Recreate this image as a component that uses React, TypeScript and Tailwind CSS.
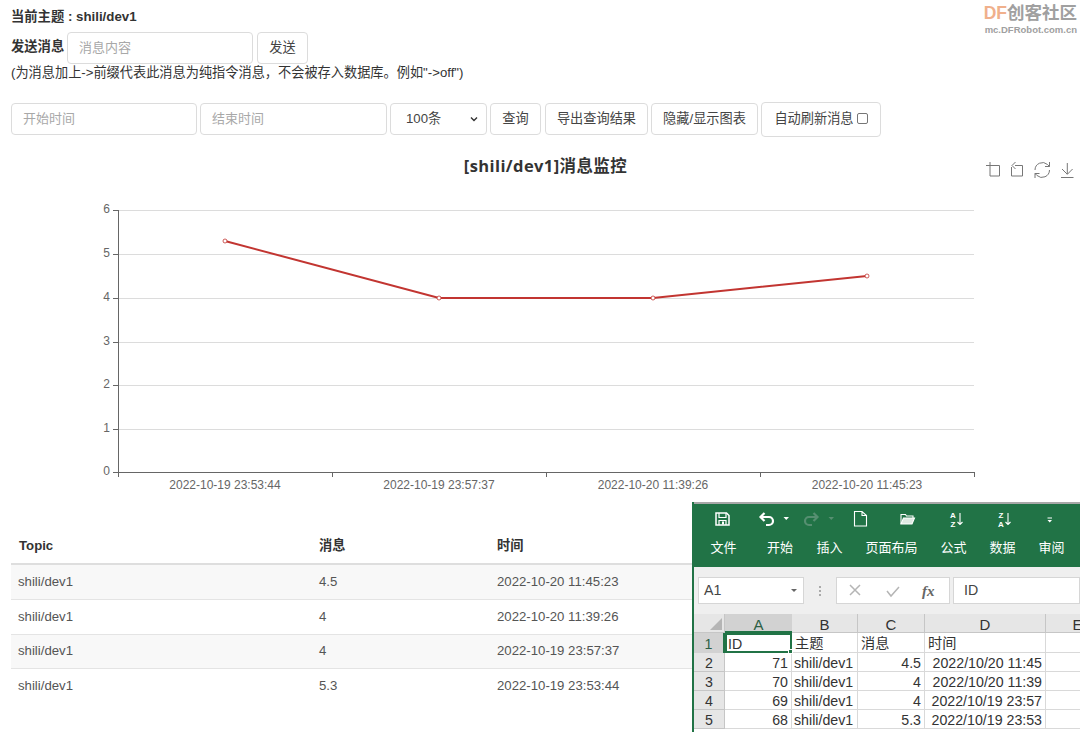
const FONT = "font-['Liberation_Sans','Noto_Sans_CJK_SC',sans-serif]";

const rows = [
  ["shili/dev1", "4.5", "2022-10-20 11:45:23"],
  ["shili/dev1", "4", "2022-10-20 11:39:26"],
  ["shili/dev1", "4", "2022-10-19 23:57:37"],
  ["shili/dev1", "5.3", "2022-10-19 23:53:44"],
];

const sheet = [
  ["2", "71", "shili/dev1", "4.5", "2022/10/20 11:45"],
  ["3", "70", "shili/dev1", "4", "2022/10/20 11:39"],
  ["4", "69", "shili/dev1", "4", "2022/10/19 23:57"],
  ["5", "68", "shili/dev1", "5.3", "2022/10/19 23:53"],
];

function Chart() {
  const ys = [210, 254, 298, 342, 385, 429, 472];
  const xs = [118, 332, 546, 760, 974];
  const labels = ["2022-10-19 23:53:44", "2022-10-19 23:57:37", "2022-10-20 11:39:26", "2022-10-20 11:45:23"];
  const pts: [number, number][] = [[225, 241], [439, 298], [653, 298], [867, 276]];
  return (
    <svg width="1080" height="360" viewBox="0 150 1080 360" className="block" fontFamily="'Liberation Sans','Noto Sans CJK SC',sans-serif">
      <text x="545.500" y="172" textAnchor="middle" fontSize="16.500" letterSpacing="0.4" fontWeight="700" fill="#333" fontFamily="'Open Sans','Noto Sans CJK SC',sans-serif">[shili/dev1]消息监控</text>
      {/* toolbox */}
      <g fill="none" stroke="#777" strokeWidth="1">
        <path d="M986 165.500h13.500v10.500h-9.500V162" />
        <path d="M1015 165.500h7.500v10.500h-11v-9M1015.500 162l-3.500 3.500 3.500 3.500" />
        <path d="M1035 170a7.500 7.500 0 0 1 12.500-5.500l2 2M1049.500 170a7.500 7.500 0 0 1-12.500 5.500l-2-2M1049.500 162v4.500h-4.500M1035 178v-4.500h4.500" />
        <path d="M1061 177.500h12.500M1067.300 163v11M1062 169l5.300 5.300 5.300-5.300" />
      </g>
      {ys.map((y, i) => (
        <g key={y}>
          {i < 6 && <line x1="118" x2="974" y1={y + 0.5} y2={y + 0.5} stroke="#dcdcdc" />}
          <line x1="113" x2="118" y1={y + 0.5} y2={y + 0.5} stroke="#666" />
          <text x="110" y={y + 3} textAnchor="end" fontSize="12" fill="#666">{6 - i}</text>
        </g>
      ))}
      <line x1="118.500" x2="118.500" y1="210" y2="473" stroke="#666" />
      <line x1="113" x2="974" y1="472.500" y2="472.500" stroke="#666" />
      {xs.map((x) => (
        <line key={x} x1={x + 0.5} x2={x + 0.5} y1="472" y2="477" stroke="#666" />
      ))}
      {labels.map((l, i) => (
        <text key={l} x={225 + i * 214} y="489" textAnchor="middle" fontSize="12" fill="#666">{l}</text>
      ))}
      <polyline points={pts.map((p) => p.join(",")).join(" ")} fill="none" stroke="#c23531" strokeWidth="2" />
      {pts.map((p) => (
        <circle key={p[0]} cx={p[0]} cy={p[1]} r="2" fill="#fff" stroke="#c23531" strokeWidth="0.800" />
      ))}
    </svg>
  );
}

function Excel() {
  const tabs: [string, string][] = [["文件", "w-[59px] pr-[4px]"], ["开始", "w-[50px]"], ["插入", "w-[49px]"], ["页面布局", "w-[75px]"], ["公式", "w-[49px]"], ["数据", "w-[49px]"], ["审阅", "w-[49px]"]];
  return (
    <div className="absolute left-[692px] top-[502px] w-[388px] h-[230px] overflow-hidden border-l-2 border-[#217346] bg-[#e9e9e9] text-[14.200px] text-[#444]">
      <div className="h-[65px] bg-[#217346] border-t-2 border-[#a8a8a8] text-white">
        <svg width="386" height="30" viewBox="692 504 386 30" className="block">
          <g fill="none" stroke="#fff" strokeWidth="1.500">
            <path d="M714 513h10.500l2.500 2.500V525h-13z" />
            <path d="M717 513v4.500h7V513" strokeWidth="1.200" />
            <path d="M717 525v-4.500h7V525" strokeWidth="1.200" />
          </g>
          <path d="M720 521.500h2v3h-2z" fill="#fff" />
          <g fill="none" stroke="#fff" strokeWidth="2.200">
            <path d="M762.500 513l-4 4 4 4M758.500 517h8.500a4 4 0 0 1 0 8h-3" />
          </g>
          <g fill="none" stroke="#568f71" strokeWidth="2.200">
            <path d="M811.500 513l4 4-4 4M815.500 517h-8.500a4 4 0 0 0 0 8h3" />
          </g>
          <path d="M781.500 517h5.500l-2.750 3z" fill="#fff" />
          <path d="M826.500 517h5.500l-2.750 3z" fill="#568f71" />
          <g fill="none" stroke="#fff" strokeWidth="1.100">
            <path d="M860 511.500h-7.500v14.500h12v-10.500zM860 511.500v4h4.500" />
            <path d="M899 524v-9.500h4.500l1 1.500h6.500v2" />
            <path d="M899 524l2.500-6h11l-2.500 6z" fill="#fff" fillOpacity="0.850" />
            <path d="M958 513v11.500M955.500 522l2.500 2.500 2.500-2.500M1006 513v11.500M1003.500 522l2.500 2.500 2.500-2.500" />
          </g>
          <path d="M1045.500 517.500h4.500v1h-4.500zM1045.500 520h4.500l-2.250 2.500z" fill="#fff" />
          <g fontSize="8" fill="#fff" fontFamily="'Liberation Sans',sans-serif" fontWeight="700" textAnchor="middle">
            <text x="951" y="517.500">A</text>
            <text x="951" y="527">Z</text>
            <text x="999" y="517.500">Z</text>
            <text x="999" y="527">A</text>
          </g>
        </svg>
        <div className="flex text-[13px] h-[29px] pl-[2px] pb-[1px] items-center">
          {tabs.map(([t, w]) => (
            <span key={t} className={`${w} text-center shrink-0`}>{t}</span>
          ))}
        </div>
      </div>
      <div className="flex h-[47px] pt-[10px] bg-[#efefef]">
        <div className="ml-[4px] w-[106px] h-[27px] bg-white border border-[#d6d6d6] flex items-center justify-between px-[5px]">
          <span>A1</span>
          <span className="w-0 h-0 border-x-[3px] border-t-[3px] border-x-transparent border-t-[#666] mr-[1px]" />
        </div>
        <div className="w-[32px] h-[27px] flex flex-col items-center justify-center gap-[2px]">
          <span className="w-[2px] h-[2px] bg-[#aaa]" />
          <span className="w-[2px] h-[2px] bg-[#aaa]" />
          <span className="w-[2px] h-[2px] bg-[#aaa]" />
        </div>
        <div className="w-[114px] h-[27px] bg-white border border-[#d6d6d6] flex items-center">
          <svg width="112" height="25" viewBox="0 0 112 25">
            <path d="M13 7l10 10M23 7L13 17" stroke="#b5b5b5" strokeWidth="1.500" />
            <path d="M50 13l4 5 8-9" stroke="#b5b5b5" strokeWidth="1.500" fill="none" />
            <text x="85" y="18" fontSize="15" fontStyle="italic" fontWeight="700" fill="#666" fontFamily="'Liberation Serif',serif">fx</text>
          </svg>
        </div>
        <div className="ml-[3px] flex-1 h-[27px] bg-white border border-[#d6d6d6] flex items-center pl-[10px]">ID</div>
      </div>
      <div className="grid grid-cols-[31px_67px_66px_67px_121px_64px] grid-rows-[19px_20px_19px_19px_19px_19px_19px] w-[416px] text-[#333] bg-white">
        <div className="bg-[#e6e6e6] border-r border-b border-[#c6c6c6] flex items-end justify-end p-[2px]">
          <span className="w-0 h-0 border-l-[12px] border-b-[12px] border-l-transparent border-b-[#b5b5b5]" />
        </div>
        <div className="bg-[#d2d2d2] border-b-2 border-[#217346] text-center text-[15px] leading-[21px] text-[#2c5f45]">A</div>
        {["B", "C", "D", "E"].map((c) => (
          <div key={c} className="bg-[#e6e6e6] border-r border-b border-[#c6c6c6] text-center text-[15px] leading-[21px]">{c}</div>
        ))}
        <div className="bg-[#d2d2d2] border-r-2 border-[#217346] text-center leading-[22px] text-[#2c5f45]">1</div>
        <div className="border-2 border-[#217346] leading-[19px] px-[1px] relative">
          ID
          <span className="absolute right-[-3px] bottom-[-3px] w-[5px] h-[5px] bg-[#217346] border border-white" />
        </div>
        {["主题", "消息", "时间", ""].map((c, i) => (
          <div key={i} className="border-r border-b border-[#d9d9d9] px-[3px] leading-[21px]">{c}</div>
        ))}
        {sheet.map((r) => (
          <div key={r[0]} className="contents">
            <div className="bg-[#e6e6e6] border-r border-b border-[#c6c6c6] text-center leading-[20px]">{r[0]}</div>
            <div className="border-r border-b border-[#d9d9d9] text-right pr-[3px] leading-[21px]">{r[1]}</div>
            <div className="border-r border-b border-[#d9d9d9] pl-[2px] leading-[21px] whitespace-nowrap">{r[2]}</div>
            <div className="border-r border-b border-[#d9d9d9] text-right pr-[3px] leading-[21px]">{r[3]}</div>
            <div className="border-r border-b border-[#d9d9d9] text-right pr-[3px] leading-[21px] whitespace-nowrap">{r[4]}</div>
            <div className="border-r border-b border-[#d9d9d9]" />
          </div>
        ))}
      </div>
    </div>
  );
}

export default function App() {
  const inputCls = "h-[32px] border border-[#dcdcdc] rounded-[4px] bg-white px-[11px] pb-[2px] text-[13px] placeholder:text-[#a8a8a8] outline-none";
  const btnCls = "h-[32px] border border-[#dcdcdc] rounded-[4px] bg-white text-[13.200px] text-[#444] flex items-center justify-center";
  return (
    <div className={`relative w-[1080px] h-[732px] overflow-hidden bg-white text-[#333] ${FONT}`}>
      <div className="absolute right-[3px] top-[1px] text-right leading-none">
        <div className="text-[17.500px] font-bold text-[#a0a0a0] leading-[24px] whitespace-nowrap"><span className="text-[#f0b08c]">DF</span>创客社区</div>
        <div className="text-[9.500px] font-bold text-[#a0a0a0] leading-[10px] whitespace-nowrap">mc.DFRobot.com.cn</div>
      </div>

      <div className="px-[11px] pt-[9px]">
        <div className="text-[13.300px] font-bold leading-[16px]">当前主题 : shili/dev1</div>
        <div className="flex items-center mt-[7px]">
          <span className="text-[13.300px] font-bold w-[56px] whitespace-nowrap pb-[2px]">发送消息</span>
          <input className={`${inputCls} w-[186px]`} placeholder="消息内容" />
          <button className={`${btnCls} w-[51px] ml-[4px]`}>发送</button>
        </div>
        <div className="text-[13.200px] leading-[16px] mt-[1px] whitespace-nowrap">(为消息加上-&gt;前缀代表此消息为纯指令消息，不会被存入数据库。例如"-&gt;off")</div>

        <div className="flex items-center mt-[20px] h-[36px]">
          <input className={`${inputCls} w-[186px]`} placeholder="开始时间" />
          <input className={`${inputCls} w-[187px] ml-[3px]`} placeholder="结束时间" />
          <div className={`${btnCls} w-[97px] ml-[3px] !justify-between pl-[15px] pr-[7px]`}>
            <span>100条</span>
            <svg width="10" height="10" viewBox="0 0 10 10"><path d="M2 3.500l3 3 3-3" fill="none" stroke="#333" strokeWidth="1.400" /></svg>
          </div>
          <button className={`${btnCls} w-[51px] ml-[3px]`}>查询</button>
          <button className={`${btnCls} w-[103px] ml-[4px]`}>导出查询结果</button>
          <button className={`${btnCls} w-[107px] ml-[3px]`}>隐藏/显示图表</button>
          <div className={`${btnCls} !h-[35px] w-[120px] ml-[3px] gap-[3px]`}>
            自动刷新消息
            <span className="w-[11px] h-[11px] border border-[#767676] rounded-[2px] -mt-[1px]" />
          </div>
        </div>
      </div>

      <div className="mt-[13px]">
        <Chart />
      </div>

      <table className="ml-[11px] w-[1058px] mt-[18px] text-[13.200px] border-collapse table-fixed">
        <thead>
          <tr className="h-[36px] border-b-2 border-[#dedede] font-bold text-left">
            <th className="w-[301px] pl-[8px]">Topic</th>
            <th className="w-[178px] pl-[7px]">消息</th>
            <th className="pl-[7px]">时间</th>
          </tr>
        </thead>
        <tbody className="text-[#555]">
          {rows.map((r, i) => (
            <tr key={r[2]} className={`${i === 0 ? "h-[35.500px]" : "h-[34.500px]"} ${i < 3 ? "border-b border-[#e4e4e4]" : ""} ${i % 2 === 0 ? "bg-[#f8f8f8]" : "bg-white"}`}>
              <td className="pl-[7px]">{r[0]}</td>
              <td className="pl-[7px]">{r[1]}</td>
              <td className="pl-[7px]">{r[2]}</td>
            </tr>
          ))}
        </tbody>
      </table>

      <Excel />
    </div>
  );
}
